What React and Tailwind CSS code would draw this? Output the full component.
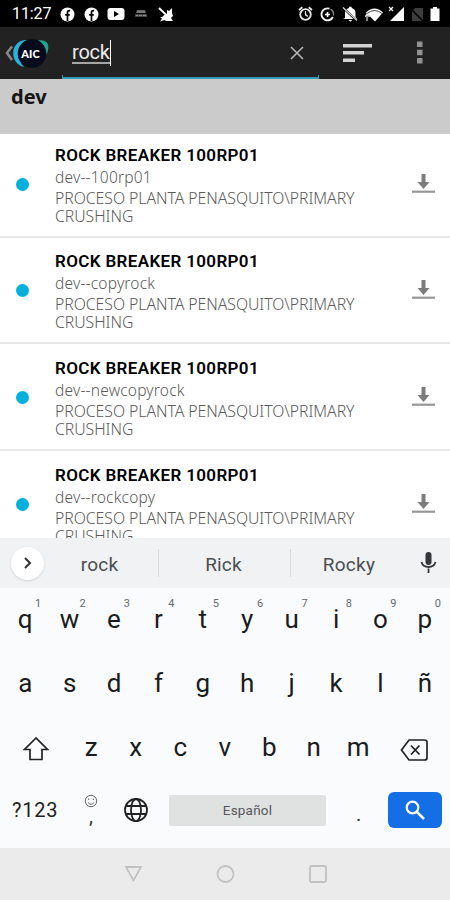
import React from 'react';

const results = [
    { id: 1, tag: 'dev--100rp01' },
    { id: 2, tag: 'dev--copyrock' },
    { id: 3, tag: 'dev--newcopyrock' },
    { id: 4, tag: 'dev--rockcopy' },
];

const topKeys = ['q', 'w', 'e', 'r', 't', 'y', 'u', 'i', 'o', 'p'];
const homeKeys = ['a', 's', 'd', 'f', 'g', 'h', 'j', 'k', 'l', 'ñ'];
const bottomKeys = ['z', 'x', 'c', 'v', 'b', 'n', 'm'];

const FacebookBadge = () => (
    <svg width="15" height="15" viewBox="0 0 15 15">
        <circle cx="7.5" cy="7.5" r="7" fill="#fff" />
        <path d="M10.2 3.6H9.1Q7.5 3.6 7.5 5.3V14M5.2 7.9h4.6" stroke="#000" strokeWidth="1.7" fill="none" />
    </svg>
);

const StatusBar = () => (
    <div className="flex h-[27px] items-center bg-black pt-px pr-[10px] pl-3 text-white">
        <span className="w-[48px] font-['Roboto'] text-[16px] tracking-[-0.1px]">11:27</span>
        <FacebookBadge />
        <div className="w-[9px]" />
        <FacebookBadge />
        <svg className="ml-2" width="18" height="14" viewBox="0 0 18 14">
            <rect x="0.5" y="1" width="17" height="12" rx="3" fill="#fff" />
            <path d="M7 4l5 3-5 3z" fill="#000" />
        </svg>
        <svg className="ml-[9px]" width="14" height="10" viewBox="0 0 14 10">
            <path d="M3 1h8l1 3H2z" fill="#666" />
            <path d="M1 5h12v3H1z" fill="#444" />
            <path d="M3 3h8M2 6.500h2m1 0h3m1 0h3" stroke="#8a8a8a" />
        </svg>
        <svg className="ml-[10px]" width="17" height="17" viewBox="0 0 17 17">
            <path d="M6 9l3-1V4l2 1 3-3v5l1 3-2 2 2 3H8l-1.500-1L2 15.500l2-3-2-1 3-1z" fill="#fff" />
            <path d="M1 2l9 8.500" stroke="#fff" strokeWidth="2" />
            <path d="M3.500 2l5 5" stroke="#000" strokeWidth="0.800" />
        </svg>
        <div className="flex-1" />
        <svg width="15" height="16" viewBox="0 0 15 16" fill="none" stroke="#e6e6e6">
            <circle cx="7.5" cy="8.5" r="5.3" strokeWidth="1.8" />
            <path d="M1 4l3.3-2.8M14 4l-3.3-2.8" strokeWidth="1.8" />
            <path d="M7.5 5.2v3.6l2.4 1.6" strokeWidth="1.3" />
        </svg>
        <svg className="ml-[7px]" width="15" height="15" viewBox="0 0 15 15" fill="none">
            <path d="M9.5 1.700A6 6 0 1 0 12.900 10" stroke="#f0f0f0" strokeWidth="1.900" />
            <path d="M10.500 2.300A6 6 0 0 1 13.400 8.500" stroke="#777" strokeWidth="1.600" />
            <path d="M7.5 5v5M5 7.5h5" stroke="#fff" strokeWidth="1.7" />
        </svg>
        <svg className="ml-[7px]" width="17" height="16" viewBox="0 0 17 16">
            <path d="M3 12V7q0-4 4-5V.8h2.600V2Q13.500 3 13.500 7v4l1.500 2H1zM6.500 14h3.800l-1.900 1.800z" fill="#fff" />
            <path d="M1 1.5l14 13.5" stroke="#000" strokeWidth="2.4" />
            <path d="M1 1.5l14 13" stroke="#ddd" strokeWidth="1.1" />
        </svg>
        <svg className="ml-[6px]" width="19" height="15" viewBox="0 0 19 15">
            <path d="M1 5.500q8.500-8 17 0L10 14.500z" fill="#fff" />
            <path d="M2 6.500q7.500-6 15 0" stroke="#444" strokeWidth="1" fill="none" />
            <path d="M2 7v7M0 10l2-3 2.500 3" stroke="#ddd" strokeWidth="1.200" fill="none" />
        </svg>
        <svg className="ml-[4px]" width="17" height="16" viewBox="0 0 17 16">
            <path d="M16 1v14H2z" fill="#fff" />
            <path d="M1 1l4 4M5 1L1 5" stroke="#fff" strokeWidth="1.2" />
        </svg>
        <svg className="ml-[5px]" width="14" height="15" viewBox="0 0 14 15">
            <path d="M5 1h8v13H2V4z" fill="#3d3d3d" />
            <path d="M0 1l13 13" stroke="#000" strokeWidth="1.600" />
        </svg>
        <svg className="ml-[6px]" width="10" height="16" viewBox="0 0 10 16">
            <path d="M3 1h4v1.500h2.500V15h-9V2.500H3z" fill="#fff" />
        </svg>
    </div>
);

const ActionBar = () => (
    <div className="flex h-[52px] bg-[#222222]">
        <svg width="62" height="52" viewBox="0 0 62 52">
            <path d="M12 19.500L7 26L12 33" stroke="#8d8784" strokeWidth="2.500" fill="none" />
            <path d="M25 13C9 15 10 37 24 40C17 33 17 22 27 13z" fill="#27b4d8" />
            <path d="M38 13.500Q48 12 48.500 20Q48.500 25 45 30z" fill="#1fa592" />
            <circle cx="32" cy="26.500" r="14.300" fill="#070b1c" />
            <text x="30.500" y="31" fill="#fff" fontFamily="Lato" fontWeight="900" fontSize="11" textAnchor="middle">AIC</text>
        </svg>
        {/* Search field */}
        <div className="flex w-[257px] flex-col">
            <div className="flex flex-1 items-center pt-[3px] pr-[15px] pl-[10px]">
                <span className="border-b-2 border-[#a5a5a5] font-['Roboto'] text-[20px] leading-[20px] tracking-[-0.2px] text-[#ededed]">rock</span>
                <div className="h-[26px] w-px bg-white" />
                <div className="flex-1" />
                <svg width="14" height="14" viewBox="0 0 14 14">
                    <path d="M1 1l12 12M13 1L1 13" stroke="#b5b5b5" strokeWidth="1.600" />
                </svg>
            </div>
            <div className="h-[4px] border-x border-b-2 border-[#319cba]" />
        </div>
        <svg className="ml-[24px] mt-[16px]" width="30" height="20" viewBox="0 0 30 20" fill="#d4d4d4">
            <rect x="0" y="1" width="29" height="3.500" />
            <rect x="0" y="8" width="21" height="3.500" />
            <rect x="0" y="15.500" width="12" height="3.500" />
        </svg>
        <svg className="ml-[44px] mt-[14px]" width="6" height="24" viewBox="0 0 6 24" fill="#929292">
            <rect y="0.500" width="5.500" height="5.500" />
            <rect y="8.700" width="5.500" height="5.500" />
            <rect y="17" width="5.500" height="5.500" />
        </svg>
    </div>
);

const ResultRow = ({ tag }) => (
    <div className="flex h-[106.700px] shrink-0 items-start border-b-2 border-[#e8e8e8] pt-[12.500px]">
        <div className="mt-[34px] ml-4 size-[13px] rounded-full bg-[#06b0dc]" />
        <div className="ml-[26px] w-[340px] text-[#5a5a5a]">
            <div className="font-['Roboto'] text-[17px] leading-[23px] font-semibold tracking-[0.36px] text-black">ROCK BREAKER 100RP01</div>
            <div className="font-['Noto_Sans'] text-[15.500px] leading-[21px] font-light tracking-[0.2px]">{tag}</div>
            <div className="pt-[1px] font-['Noto_Sans'] text-[15.800px] leading-[18px] font-light tracking-[-0.04px]">
                PROCESO PLANTA PENASQUITO\PRIMARY<br />CRUSHING
            </div>
        </div>
        <svg className="mt-[29px] ml-[17px]" width="24" height="22" viewBox="0 0 24 22">
            <path d="M9.500 1h4v8h4l-6 7-6-7h4z" fill="#7c7c7c" />
            <path d="M0 18.700h23" stroke="#969696" strokeWidth="2.200" />
        </svg>
    </div>
);

const Key = ({ label, hint }) => (
    <div className="relative flex w-[44.500px] items-center justify-center font-['Roboto'] text-[26px] leading-[30px] text-[#1b1c1e]">
        {label}
        {hint && <span className="absolute -top-[7px] left-[32px] text-[11px] leading-[14px] text-[#66696c]">{hint}</span>}
    </div>
);

const Suggestions = () => (
    <div className="flex h-[50px] items-center bg-[#f0f2f4] font-['Roboto'] text-[19px] text-[#4b4e51]">
        <div className="ml-[11px] flex size-[33px] items-center justify-center rounded-full bg-white shadow">
            <svg width="10" height="14" viewBox="0 0 10 14">
                <path d="M2 2l5 5-5 5" stroke="#333" strokeWidth="2" fill="none" />
            </svg>
        </div>
        <span className="w-[114px] pt-[4px] pr-[3px] text-center tracking-[0.200px]">rock</span>
        <div className="h-[28px] w-px bg-[#d8dadc]" />
        <span className="w-[131px] pt-[4px] pr-[2px] text-center tracking-[0.200px]">Rick</span>
        <div className="h-[28px] w-px bg-[#d8dadc]" />
        <span className="w-[117px] pt-[4px] pr-[1px] text-center tracking-[0.300px]">Rocky</span>
        <svg className="ml-[12px]" width="18" height="24" viewBox="0 0 18 24">
            <rect x="5.500" y="1" width="6" height="13" rx="3" fill="#34373a" />
            <path d="M1.500 11a7.200 6.500 0 0 0 14 0M8.500 17.500v4.500" stroke="#34373a" strokeWidth="1.800" fill="none" />
        </svg>
    </div>
);

const Keyboard = () => (
    <div className="h-[260px] bg-[#f9fbfc] px-[3px]">
        <div className="flex pt-[16px]">
            {topKeys.map((k, i) => <Key key={k} label={k} hint={String((i + 1) % 10)} />)}
        </div>
        <div className="flex pt-[34px]">
            {homeKeys.map((k) => <Key key={k} label={k} />)}
        </div>
        <div className="flex items-start pt-[34px]">
            <svg className="mt-[4px] mr-[20px] ml-[20px]" width="26" height="26" viewBox="0 0 26 26">
                <path d="M13 2L1.500 13.500H7V23.500H19V13.500H24.500z" stroke="#222" strokeWidth="1.700" fill="none" />
            </svg>
            {bottomKeys.map((k) => <Key key={k} label={k} />)}
            <svg className="mt-[6px] ml-[19px]" width="28" height="24" viewBox="0 0 28 24" fill="none" stroke="#222">
                <path d="M9 2H24.500Q27 2 27 4V20Q27 22 24.500 22H9L1.500 12z" strokeWidth="1.700" />
                <path d="M9.500 7.500l8.500 9M18 7.500l-8.500 9" transform="translate(1.500 0)" strokeWidth="1.800" />
            </svg>
        </div>
        <div className="flex items-center pt-[29px]">
            <span className="ml-[9px] w-[69px] font-['Roboto'] text-[20px] tracking-[0.800px] text-[#222]">?123</span>
            <div className="flex w-[20px] flex-col items-center pb-[2px]">
                <svg width="14" height="14" viewBox="0 0 14 14" fill="none" stroke="#666">
                    <circle cx="7" cy="7" r="5.700" />
                    <path d="M4.700 4.500v1.500M9.300 4.500v1.500M4 8.500q3 3.500 6 0" />
                </svg>
                <span className="font-['Roboto'] text-[20px] leading-[17px] text-[#333]">,</span>
            </div>
            <svg className="ml-[22px]" width="26" height="26" viewBox="0 0 26 26" fill="none" stroke="#222" strokeWidth="1.800">
                <circle cx="13" cy="13" r="11" />
                <ellipse cx="13" cy="13" rx="5" ry="11" />
                <path d="M3 9h20M3 17h20" />
            </svg>
            <div className="ml-[20px] flex h-[31px] w-[157px] items-center justify-center rounded-[2px] bg-[#e0e2e2] pt-px font-['Roboto'] text-[13.500px] tracking-[0.200px] text-[#55585a]">Español</div>
            <span className="mt-[8px] ml-[30px] w-[7px] font-['Roboto'] text-[20px] text-[#333]">.</span>
            <div className="ml-[25px] flex h-[36px] w-[54px] items-center justify-center rounded-[6px] bg-[#146fe6]">
                <svg width="22" height="22" viewBox="0 0 22 22" fill="none" stroke="#fff">
                    <circle cx="8.500" cy="8.500" r="5.800" strokeWidth="2.200" />
                    <path d="M13 13l7 7" strokeWidth="2.500" />
                </svg>
            </div>
        </div>
    </div>
);

const NavBar = () => (
    <div className="flex h-[52px] items-center bg-[#ebebeb] pl-[124px]">
        <svg width="204" height="20" viewBox="0 0 204 20" fill="none" stroke="#c2c2c2" strokeWidth="1.800">
            <path d="M2 3H17L9.500 16.500z" />
            <circle cx="101.500" cy="10" r="8" />
            <rect x="186" y="2" width="16" height="16" rx="1.500" />
        </svg>
    </div>
);

export default function App() {
    return (
        <div className="flex h-[900px] w-[450px] flex-col overflow-hidden bg-white">
            <StatusBar />
            <ActionBar />
            <div className="h-[55px] bg-[#cbcbcb] pl-[11px] font-['Noto_Sans'] text-[20px] leading-[36px] font-bold text-[#161616]">dev</div>
            <div className="flex h-[404px] flex-col overflow-hidden">
                <div className="-mt-[3px] flex flex-col">
                    {results.map((r) => <ResultRow key={r.id} tag={r.tag} />)}
                </div>
            </div>
            <Suggestions />
            <Keyboard />
            <NavBar />
        </div>
    );
}
